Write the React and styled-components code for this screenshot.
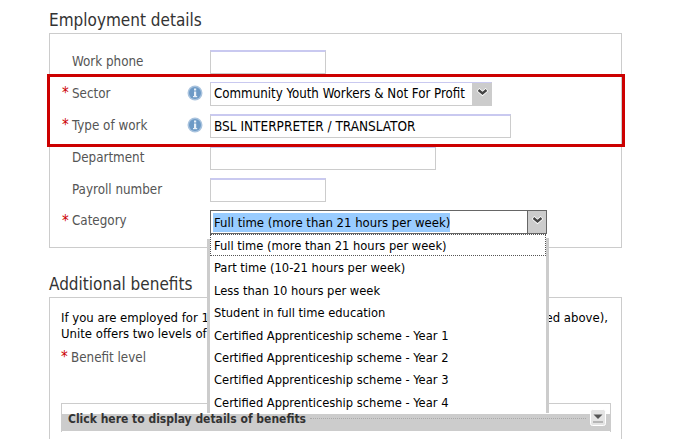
import React from "react";
import styled, { createGlobalStyle } from "styled-components";

const GlobalStyle = createGlobalStyle`
  html, body {
    margin: 0;
    padding: 0;
    height: 439px;
    overflow: hidden;
    background: #fff;
    font-family: "DejaVu Sans Condensed", "DejaVu Sans", sans-serif;
  }
`;

const Page = styled.div`
  position: relative;
  width: 679px;
  height: 439px;
  padding: 10px 57px 0 49px;
  box-sizing: border-box;
  overflow: hidden;
`;

const Heading = styled.h2`
  margin: 0;
  height: 23px;
  font-size: 17px;
  line-height: 20px;
  font-weight: 400;
  color: #333;
`;

const Box = styled.div`
  border: 1px solid #ccc;
  box-sizing: border-box;
  height: ${(p) => p.$height}px;
  padding: ${(p) => p.$padding};
  margin-bottom: 26px;
`;

const Row = styled.div`
  display: grid;
  grid-template-columns: 10px 115px 23px 1fr;
  height: 32px;
  align-items: start;
`;

const Star = styled.span`
  color: #c00;
  font-size: 15px;
  line-height: 22px;
`;

const Label = styled.label`
  color: #555;
  font-size: 13.3px;
  line-height: 22px;
  margin-top: ${(p) => p.$nudge ?? 1}px;
`;

const Input = styled.div`
  box-sizing: border-box;
  width: ${(p) => p.$width}px;
  height: 24px;
  border: 1px solid #ccc;
  border-width: 2px 1.5px 1.5px;
  border-top-color: #c9c9f0;
  padding: 0 3px;
  color: #000;
  font-size: 13.5px;
  line-height: 21px;
  white-space: nowrap;
  overflow: hidden;
`;

const Select = styled.div`
  display: flex;
  box-sizing: border-box;
  width: ${(p) => p.$width}px;
  height: 24px;
  border: 1px solid ${(p) => (p.$open ? "#666" : "#ccc")};
  border-width: ${(p) => (p.$open ? "1px" : "1.5px")};
  border-top-color: ${(p) => (p.$open ? "#666" : "#c9c9f0")};
`;

const SelectText = styled.div`
  flex: 1;
  padding: ${(p) => (p.$open ? "2px 2px 0" : "1px 3px 0")};
  color: #000;
  font-size: ${(p) => (p.$open ? 13 : 13.2)}px;
  line-height: 19px;
  white-space: nowrap;
  overflow: hidden;
`;

const Selected = styled.span`
  display: inline-block;
  padding-left: 1px;
  background: #99ccff;
`;

const ArrowButton = styled.div`
  width: 19px;
  flex: none;
  background: #ccc;
  border-left: 1px solid ${(p) => (p.$open ? "#666" : "#ccc")};
  display: flex;
  justify-content: center;
  padding-top: 3px;
  box-sizing: border-box;
`;

const Dropdown = styled.ul`
  position: absolute;
  left: 210px;
  top: 234px;
  width: 336px;
  height: 179px;
  margin: 0;
  padding: 0;
  list-style: none;
  background: #fff;
  box-sizing: border-box;
  z-index: 2;

  &::before {
    content: "";
    position: absolute;
    left: -3px;
    top: 5px;
    bottom: 0;
    width: 3px;
    background: #ccc;
  }

  &::after {
    content: "";
    position: absolute;
    right: -3px;
    top: 4px;
    bottom: 0;
    width: 3px;
    background: #ccc;
  }
`;

const Option = styled.li`
  box-sizing: border-box;
  height: 22.4px;
  padding: 0 3px;
  font-size: 12.8px;
  line-height: 21px;
  color: #000;
  white-space: nowrap;
  border: 1px dotted ${(p) => (p.$active ? "#555" : "transparent")};
`;

const Intro = styled.p`
  display: flex;
  justify-content: space-between;
  margin: 0;
  padding-right: 3px;
  color: #000;
  font-size: 13px;
  line-height: 16px;
  white-space: nowrap;
`;

const BenefitRow = styled.div`
  display: grid;
  grid-template-columns: 10px 1fr;
  height: 57px;
  margin-top: 4px;
`;

const Collapse = styled.div`
  border: 1px solid #ccc;
  border-bottom: 0;
  padding-top: 10px;
  height: 18px;
`;

const CollapseBar = styled.div`
  display: flex;
  align-items: flex-start;
  height: 17px;
  margin: 0 -1px;
  padding: 0 5px 0 7px;
  background: #ccc;
  color: #333;
  font-size: 12px;
  font-weight: 700;
`;

const CollapseTitle = styled.span`
  margin-top: -1px;
  line-height: 13px;
  white-space: nowrap;
`;

const Leader = styled.span`
  flex: 1;
  margin: 4px 4px 0;
  border-top: 1px dotted #aaa;
`;

const DetailsButton = styled.span`
  display: flex;
  margin-top: -5px;
`;

const Highlight = styled.div`
  position: absolute;
  left: 47px;
  top: 74px;
  width: 578px;
  height: 73px;
  box-sizing: border-box;
  border: 3px solid #c00;
  pointer-events: none;
`;

const InfoIcon = () => (
  <svg width="16" height="16" viewBox="0 0 16 16" style={{ marginTop: 3 }}>
    <circle cx="8" cy="8" r="7.5" fill="#a9c3de" />
    <circle cx="8" cy="8" r="6" fill="#6d9ac6" />
    <rect x="7" y="3.5" width="2.2" height="2" fill="#e8f0f8" />
    <rect x="7" y="6.5" width="2.2" height="5" fill="#e8f0f8" />
    <rect x="6" y="11" width="4.2" height="1.2" fill="#e8f0f8" />
  </svg>
);

const Chevron = ({ outline }) => (
  <svg width="15" height="12" viewBox="0 0 15 12">
    <path d="M3 3.5 L7.5 7.5 L12 3.5" fill="none" stroke="#fff" strokeWidth="4" />
    <path d="M3.5 4 L7.5 7.5 L11.5 4" fill="none" stroke={outline} strokeWidth="2.4" />
  </svg>
);

const DetailsIcon = () => (
  <svg width="16" height="17" viewBox="0 0 16 17">
    <rect x="0.5" y="0.5" width="15" height="16" rx="2" fill="#e4e4e4" stroke="#fff" />
    <path d="M3.5 5.5 H12.5 L8 10 Z" fill="#555" />
    <rect x="3" y="12.5" width="10" height="1" fill="#888" />
  </svg>
);

const categories = [
  "Full time (more than 21 hours per week)",
  "Part time (10-21 hours per week)",
  "Less than 10 hours per week",
  "Student in full time education",
  "Certified Apprenticeship scheme - Year 1",
  "Certified Apprenticeship scheme - Year 2",
  "Certified Apprenticeship scheme - Year 3",
  "Certified Apprenticeship scheme - Year 4",
];

export default function App() {
  return (
    <Page>
      <GlobalStyle />
      <Heading>Employment details</Heading>
      <Box $height={215} $padding="16px 0 0 12px">
        <Row>
          <span />
          <Label>Work phone</Label>
          <span />
          <Input $width={116} />
        </Row>
        <Row>
          <Star>*</Star>
          <Label>Sector</Label>
          <InfoIcon />
          <Select $width={282}>
            <SelectText>Community Youth Workers &amp; Not For Profit</SelectText>
            <ArrowButton>
              <Chevron outline="#444" />
            </ArrowButton>
          </Select>
        </Row>
        <Row>
          <Star>*</Star>
          <Label>Type of work</Label>
          <InfoIcon />
          <Input $width={301}>BSL INTERPRETER / TRANSLATOR</Input>
        </Row>
        <Row>
          <span />
          <Label>Department</Label>
          <span />
          <Input $width={226} />
        </Row>
        <Row>
          <span />
          <Label>Payroll number</Label>
          <span />
          <Input $width={116} />
        </Row>
        <Row>
          <Star>*</Star>
          <Label $nudge={0}>Category</Label>
          <span />
          <Select $width={337} $open>
            <SelectText $open>
              <Selected>Full time (more than 21 hours per week)</Selected>
            </SelectText>
            <ArrowButton $open>
              <Chevron outline="#444" />
            </ArrowButton>
          </Select>
        </Row>
      </Box>
      <Heading>Additional benefits</Heading>
      <Box $height={160} $padding="12px 10px 0 11px">
        <Intro>
          <span>If you are employed for 1</span>
          <span>ed above),</span>
        </Intro>
        <Intro>Unite offers two levels of</Intro>
        <BenefitRow>
          <Star>*</Star>
          <Label>Benefit level</Label>
        </BenefitRow>
        <Collapse>
          <CollapseBar>
            <CollapseTitle>Click here to display details of benefits</CollapseTitle>
            <Leader />
            <DetailsButton>
              <DetailsIcon />
            </DetailsButton>
          </CollapseBar>
        </Collapse>
      </Box>
      <Dropdown>
        {categories.map((c, i) => (
          <Option key={c} $active={i === 0}>
            {c}
          </Option>
        ))}
      </Dropdown>
      <Highlight />
    </Page>
  );
}
